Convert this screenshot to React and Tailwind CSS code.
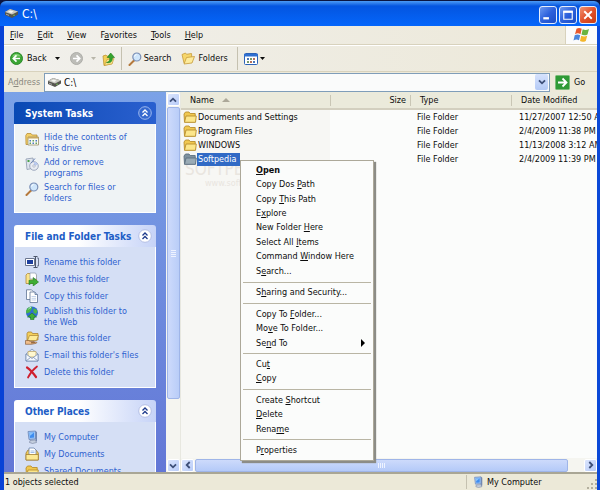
import { clsx } from "clsx"

const TASK_GROUPS = [
  {
    title: "System Tasks",
    primary: true,
    items: [
      { label: "Hide the contents of this drive", icon: HideIcon },
      { label: "Add or remove programs", icon: ProgramsIcon },
      { label: "Search for files or folders", icon: SearchIcon },
    ],
  },
  {
    title: "File and Folder Tasks",
    items: [
      { label: "Rename this folder", icon: RenameIcon },
      { label: "Move this folder", icon: MoveIcon },
      { label: "Copy this folder", icon: CopyIcon },
      { label: "Publish this folder to the Web", icon: GlobeIcon },
      { label: "Share this folder", icon: ShareIcon },
      { label: "E-mail this folder's files", icon: MailIcon },
      { label: "Delete this folder", icon: DeleteIcon },
    ],
  },
  {
    title: "Other Places",
    items: [
      { label: "My Computer", icon: ComputerIcon },
      { label: "My Documents", icon: DocumentsIcon },
      { label: "Shared Documents", icon: FolderIcon },
    ],
  },
]

const FILES = [
  { name: "Documents and Settings", date: "11/27/2007 12:50 AM" },
  { name: "Program Files", date: "2/4/2009 11:38 PM" },
  { name: "WINDOWS", date: "11/13/2008 3:12 AM" },
  { name: "Softpedia", date: "2/4/2009 11:39 PM", selected: true },
]

// "&" marks the access key, as in the Win32 resource files
const MENU_BAR = ["&File", "&Edit", "&View", "F&avorites", "&Tools", "&Help"]

const CONTEXT_MENU = [
  "&Open",
  "Copy Dos &Path",
  "Copy &This Path",
  "E&xplore",
  "New Folder &Here",
  "Select All &Items",
  "Command &Window Here",
  "S&earch...",
  "-",
  "S&haring and Security...",
  "-",
  "Copy To &Folder...",
  "Mo&ve To Folder...",
  "Se&nd To",
  "-",
  "Cu&t",
  "&Copy",
  "-",
  "Create &Shortcut",
  "&Delete",
  "Rena&me",
  "-",
  "P&roperties",
]

export default function App() {
  return (
    <div className="flex h-screen flex-col overflow-hidden bg-[#0a1440] pt-px font-['DejaVu_Sans_Condensed','DejaVu_Sans',sans-serif] text-[9px] leading-[11px] text-[#0c0c0c] select-none">
      <TitleBar />
      <div className="flex min-h-0 flex-1 flex-col border-r-3 border-l-4 border-r-[#0b49d8] border-l-[#0842d6] bg-[#ece9d8]">
        <MenuBar />
        <Toolbar />
        <AddressBar />
        <div className="flex min-h-0 flex-1">
          <Sidebar />
          <VerticalScrollbar />
          <FileList />
        </div>
        <StatusBar />
      </div>
    </div>
  )
}

function TitleBar() {
  return (
    <header className="flex h-[25px] shrink-0 items-center gap-1 rounded-t-md bg-linear-to-b from-[#4c9bf5] via-[#0455e0] via-20% to-[#0566fb] pr-[3px] pl-[5px]">
      <DriveIcon className="h-[9px] w-[13px]" />
      <h1 className="flex-1 text-xs text-white">C:\</h1>
      <div className="flex gap-[2px] pt-[2px]">
        <WindowButton label="Minimize">
          <path d="M3.500 12h6" strokeWidth="2.400" />
        </WindowButton>
        <WindowButton label="Maximize">
          <path d="M4 5h9v8H4z" strokeWidth="1.200" />
          <path d="M3.400 5h10.200" strokeWidth="2.400" />
        </WindowButton>
        <WindowButton label="Close" close>
          <path d="M4.500 4.500l8 8M12.500 4.500l-8 8" strokeWidth="2" />
        </WindowButton>
      </div>
    </header>
  )
}

function WindowButton({ label, close, children }) {
  return (
    <button
      aria-label={label}
      className={clsx(
        "size-[18px] rounded-[3px] border border-[#e6eefc] bg-linear-to-br",
        close ? "from-[#f0916f] via-[#e0512a] to-[#c93c10]" : "from-[#6d98f0] via-[#2c60dc] to-[#1c4cc4]"
      )}
    >
      <svg viewBox="0 0 17 17" className="size-4" fill="none" stroke="#fff">
        {children}
      </svg>
    </button>
  )
}

function AccessLabel({ text }) {
  const [before, rest] = text.split("&")
  return (
    <span>
      {before}
      <u className="underline-offset-1">{rest[0]}</u>
      {rest.slice(1)}
    </span>
  )
}

function MenuBar() {
  return (
    <nav className="flex h-[19px] shrink-0 border-b border-[#d8d2bd] bg-linear-to-r from-[#f1f0ec] to-[#ece8d8]">
      <div className="flex flex-1 items-center gap-[14px] pl-[6px]">
        {MENU_BAR.map((item) => (
          <button key={item}>
            <AccessLabel text={item} />
          </button>
        ))}
      </div>
      <div className="flex w-8 items-center justify-center border-l border-[#d8d2bd] bg-[#fbfbfb]">
        <WindowsFlag />
      </div>
    </nav>
  )
}

function Toolbar() {
  return (
    <div className="flex h-[27px] shrink-0 items-center border-t border-b border-t-white border-b-[#d8d2bd] bg-linear-to-r from-[#f1f0ec] to-[#ece8d8] pl-[6px]">
      <button className="flex items-center gap-1">
        <BackIcon />
        Back
        <Caret className="ml-1" />
      </button>
      <button className="ml-[10px] flex items-center gap-2" aria-label="Forward">
        <ForwardIcon />
        <Caret className="text-[#b8b6aa]" />
      </button>
      <button className="ml-[6px]" aria-label="Up">
        <UpIcon />
      </button>
      <Divider />
      <button className="flex items-center gap-[2px]">
        <SearchIcon className="size-[14px]" />
        Search
      </button>
      <button className="mr-[3px] ml-[10px] flex items-center gap-[3px]">
        <FoldersIcon />
        Folders
      </button>
      <Divider />
      <button className="flex items-center gap-[2px]" aria-label="Views">
        <ViewsIcon />
        <Caret />
      </button>
    </div>
  )
}

function Divider() {
  return <div className="mr-[6px] ml-[6px] h-[23px] w-px bg-[#c5c1b0]" />
}

function Caret({ className }) {
  return (
    <svg viewBox="0 0 5 3" className={clsx("h-[3px] w-[5px]", className)} fill="currentColor">
      <path d="M0 0h5L2.500 3z" />
    </svg>
  )
}

function AddressBar() {
  return (
    <div className="flex h-[20px] shrink-0 items-center bg-[#ede9d9]">
      <label htmlFor="address" className="w-10 pl-1 text-[#8a887e]">
        A<u>d</u>dress
      </label>
      <div className="flex h-[19px] flex-1 items-center gap-[3px] border border-[#7f9db9] bg-[#fafbfb] pr-px pl-[3px]">
        <DriveIcon className="h-[9px] w-[13px]" />
        <input id="address" defaultValue="C:\" className="min-w-0 flex-1 bg-transparent text-[10px] outline-none" />
        <button
          aria-label="Show addresses"
          className="flex h-4 w-[13px] items-center justify-center rounded-[2px] bg-linear-to-b from-[#d6e2fd] to-[#b4caf6]"
        >
          <Chevron className="rotate-180" />
        </button>
      </div>
      <button className="flex w-[47px] items-center gap-1 pl-[5px]">
        <GoIcon />
        Go
      </button>
    </div>
  )
}

function Sidebar() {
  return (
    <aside className="flex w-[162px] shrink-0 flex-col gap-3 overflow-hidden bg-linear-to-b from-[#7ba2e7] to-[#6377d6] px-[10px] pt-[10px]">
      {TASK_GROUPS.map((group) => (
        <section key={group.title} className="shrink-0">
          <h2
            className={clsx(
              "flex h-[22px] items-center justify-between rounded-t-[3px] pr-1 pl-[11px] text-[10px] font-bold",
              group.primary
                ? "bg-linear-to-r from-[#0849b4] to-[#2a60cf] text-white"
                : "bg-linear-to-r from-white from-45% to-[#c6d3f7] text-[#215dc6]"
            )}
          >
            {group.title}
            <CollapseIcon primary={group.primary} />
          </h2>
          <ul
            className={clsx(
              "flex flex-col gap-[3px] border border-t-0 border-white pt-2 pr-[14px] pb-2 pl-[10px]",
              group.primary ? "bg-[#eff3f5]" : "bg-[#d5dff5]"
            )}
          >
            {group.items.map(({ label, icon: Icon }) => (
              <li key={label}>
                <a href="#" className="flex items-start gap-[5px] text-[#2f62cf]">
                  <Icon className="size-[14px] shrink-0" />
                  <span className="flex min-h-[14px] flex-1 items-center">{label}</span>
                </a>
              </li>
            ))}
          </ul>
        </section>
      ))}
    </aside>
  )
}

function CollapseIcon({ primary }) {
  return (
    <svg viewBox="0 0 14 14" className="size-[14px]" fill="none">
      <circle cx="7" cy="7" r="6.300" fill={primary ? "#3568cf" : "#fff"} stroke={primary ? "#9db8ee" : "#b4bfe4"} />
      <path
        d="M4.500 6.500L7 4l2.500 2.500M4.500 10L7 7.500 9.500 10"
        stroke={primary ? "#fff" : "#1d3a8c"}
        strokeWidth="1.300"
      />
    </svg>
  )
}

function ScrollButton({ label, className }) {
  return (
    <button
      aria-label={label}
      className="flex size-[13px] shrink-0 items-center justify-center rounded-[2px] border border-white bg-linear-to-br from-[#dbe5fd] to-[#b8ccf8]"
    >
      <Chevron className={className} />
    </button>
  )
}

function Chevron({ className }) {
  return (
    <svg viewBox="0 0 8 6" className={clsx("h-[6px] w-2 shrink-0", className)} fill="none" stroke="#3d4f78" strokeWidth="1.800">
      <path d="M1 4.700L4 1.700l3 3" />
    </svg>
  )
}

function VerticalScrollbar() {
  return (
    <div className="flex w-[15px] shrink-0 flex-col items-center gap-px border-r border-[#e8e8e0] bg-[#f5f5f0] pt-px">
      <ScrollButton label="Scroll up" />
      <div className="flex w-[13px] flex-1 items-center justify-center rounded-[2px] border border-[#9fb5e8] bg-linear-to-r from-[#cddafb] to-[#b9cdf8]">
        <div className="flex flex-col gap-px">
          {[0, 1, 2, 3].map((i) => (
            <div key={i} className="h-px w-[5px] bg-[#eef3ff]" />
          ))}
        </div>
      </div>
      <div className="h-[58px]" />
      <ScrollButton label="Scroll down" className="rotate-180" />
    </div>
  )
}

function FileList() {
  return (
    <main className="relative flex min-w-0 flex-1 flex-col bg-[#fbfbfb] bg-[linear-gradient(to_right,#f7f7f4_149px,#fbfcfb_149px)]">
      <div className="min-h-0 flex-1 overflow-hidden">
        <table className="relative z-10 w-full table-fixed text-left whitespace-nowrap">
          <thead className="bg-[#ebeadb]">
            <tr className="h-[17px] border-b-2 border-[#d3cfbf]">
              <th className="w-[150px] py-0 pl-[9px] font-normal">
                <div className="flex items-center gap-2 border-r border-[#c9c6b5]">
                  Name
                  <svg viewBox="0 0 8 4" className="h-1 w-2" fill="#aca899">
                    <path d="M4 0l4 4H0z" />
                  </svg>
                </div>
              </th>
              <th className="w-20 p-0 text-right font-normal">
                <div className="border-r border-[#c9c6b5] pr-1">Size</div>
              </th>
              <th className="w-[101px] p-0 font-normal">
                <div className="border-r border-[#c9c6b5] pl-[9px]">Type</div>
              </th>
              <th className="overflow-hidden py-0 pl-[9px] font-normal">Date Modified</th>
            </tr>
          </thead>
          <tbody>
            {FILES.map((file) => (
              <tr key={file.name} className="h-[14px]">
                <td className="p-0 align-bottom">
                  <div className="flex items-center pl-[2px]">
                    <FolderIcon className="size-[14px]" selected={file.selected} />
                    <span className={clsx("px-px leading-[13px]", file.selected && "bg-[#316ac5] pr-1 text-white")}>{file.name}</span>
                  </div>
                </td>
                <td />
                <td className="pt-0 pb-px pl-[6px] align-bottom">File Folder</td>
                <td className="overflow-hidden pt-0 pb-px pl-[7px] align-bottom">{file.date}</td>
              </tr>
            ))}
          </tbody>
        </table>
      </div>
      <Watermark />
      <HorizontalScrollbar />
      <ContextMenu />
    </main>
  )
}

function Watermark() {
  return (
    <div className="absolute top-[68px] left-1 text-[#e9e5df]">
      <div className="text-[17px] leading-[18px]">SOFTPEDIA</div>
      <div className="pl-5">www.softpedia.com</div>
    </div>
  )
}

function HorizontalScrollbar() {
  return (
    <div className="flex h-[14px] shrink-0 items-center gap-px bg-[#f5f5f0]">
      <ScrollButton label="Scroll left" className="-rotate-90" />
      <div className="flex h-[13px] flex-1 items-center justify-center gap-px rounded-[2px] border border-[#9fb5e8] bg-linear-to-b from-[#cddafb] to-[#b4caf8]">
        {[0, 1, 2, 3].map((i) => (
          <div key={i} className="h-[5px] w-px bg-[#eef3ff]" />
        ))}
      </div>
      <div className="w-[14px]" />
      <ScrollButton label="Scroll right" className="rotate-90" />
    </div>
  )
}

function ContextMenu() {
  return (
    <div
      role="menu"
      className="absolute top-[68px] left-[59px] z-20 flex h-[301px] w-[134px] flex-col border border-[#aca899] bg-[#fbfcfb] p-[2px] shadow-[2px_2px_1px_#8c8c86]"
    >
      {CONTEXT_MENU.map((item, i) =>
        item === "-" ? (
          <div key={i} role="separator" className="flex h-[7px] items-center">
            <div className="h-px flex-1 bg-[#b9b5a4]" />
          </div>
        ) : (
          <button
            key={i}
            role="menuitem"
            className={clsx("flex min-h-0 flex-1 items-center justify-between pr-[6px] pl-[13px]", i === 0 && "font-bold")}
          >
            <AccessLabel text={item} />
            {item === "Se&nd To" && (
              <svg viewBox="0 0 4 8" className="h-2 w-1" fill="#000">
                <path d="M0 0l4 4-4 4z" />
              </svg>
            )}
          </button>
        )
      )}
    </div>
  )
}

function StatusBar() {
  return (
    <footer className="flex h-[18px] shrink-0 items-center border-t-2 border-[#a9a695] bg-[#ece9d8] pl-px">
      <div className="flex-1">1 objects selected</div>
      <div className="flex h-[14px] w-[131px] items-center gap-[3px] border-l border-[#c5c1b0] pl-[5px]">
        <ComputerIcon className="size-3" />
        <span className="flex-1">My Computer</span>
        <svg viewBox="0 0 10 10" className="size-[10px] self-end" fill="#b4b09e">
          <path d="M8 0h2v2H8zM8 4h2v2H8zM4 4h2v2H4zM8 8h2v2H8zM4 8h2v2H4zM0 8h2v2H0z" />
        </svg>
      </div>
    </footer>
  )
}

// --- Icons ---

function DriveIcon({ className }) {
  return (
    <svg viewBox="0 0 13 9" className={className}>
      <path d="M0 3l5-3 8 2.500v3L7 9 0 6z" fill="#55554f" />
      <path d="M0 3l5-3 8 2.500L7 5.500z" fill="#c9c9c2" />
      <path d="M3 2.800l2.500-1.300 3 1-2.300 1.400z" fill="#f6f6f2" />
      <path d="M1 5.200l3 1.200" stroke="#aaa" />
      <circle cx="9" cy="6.300" r=".7" fill="#7ddb5a" />
    </svg>
  )
}

function WindowsFlag() {
  return (
    <svg viewBox="0 0 17 16" className="h-4 w-[17px]">
      <path d="M3.500 1.800C5.500.5 7 .8 8.700 1.800L7.500 7.200C5.800 6.200 4.200 6 2 7.200z" fill="#e8582c" />
      <path d="M9.700 2.200c2 1 3.800 1 6.300-.2l-1.500 5.400c-2 1.200-4 1.100-6 .2z" fill="#69b440" />
      <path d="M1.700 8.300c2-1.200 3.800-1 5.500 0L6 13.300c-1.800-1-3.500-1-5.500.2z" fill="#4b86dc" />
      <path d="M8.200 8.700c2 1 4 1 6 0l-1.400 5.200c-2 1.200-4 1.200-5.800.2z" fill="#f3b62c" />
    </svg>
  )
}

function BackIcon() {
  return (
    <svg viewBox="0 0 13 13" className="size-[13px]" fill="none">
      <circle cx="6.500" cy="6.500" r="6" fill="#3ba535" stroke="#2c8a2a" />
      <path d="M2 4.500a5 5 0 019 0" fill="#7fd070" />
      <path d="M10 6.500H3.500M6.500 3.300L3.300 6.500l3.200 3.200" stroke="#fff" strokeWidth="1.700" />
    </svg>
  )
}

function ForwardIcon() {
  return (
    <svg viewBox="0 0 13 13" className="size-[13px]" fill="none">
      <circle cx="6.500" cy="6.500" r="6" fill="#bdbdb8" stroke="#adada8" />
      <path d="M3 6.500h6.500M6.500 3.300l3.200 3.200-3.200 3.200" stroke="#fff" strokeWidth="1.700" />
    </svg>
  )
}

function UpIcon() {
  return (
    <svg viewBox="0 0 13 14" className="h-[14px] w-[13px]">
      <path d="M1 4l3-1 1 1.300 5-.8v8.200L2 13.500z" fill="#f3cf58" stroke="#c09532" strokeWidth=".8" />
      <path d="M2.500 13.300L5 7.500l7-1-2 5.500z" fill="#fbe68c" stroke="#c09532" strokeWidth=".6" />
      <path d="M4.500 10.500C7.500 10 8 8 7.700 5.500H5.200L8.700 1l3.800 4.500h-2.200C10.500 9 9 11.500 4.500 10.500z" fill="#35a52d" stroke="#1d7a1c" strokeWidth=".6" />
    </svg>
  )
}

function SearchIcon({ className }) {
  return (
    <svg viewBox="0 0 14 14" className={className} fill="none">
      <path d="M6 8.500L1.500 13" stroke="#b5793c" strokeWidth="2" strokeLinecap="round" />
      <circle cx="8.800" cy="5" r="4" fill="#cfe6fb" stroke="#7b8fb5" strokeWidth="1.200" />
      <path d="M6.500 4.500a2.500 2.500 0 012-2" stroke="#fff" />
    </svg>
  )
}

function FoldersIcon() {
  return (
    <svg viewBox="0 0 14 13" className="h-[13px] w-[14px]">
      <path d="M1 2.500L4.500 1l1 1.300 5-.8.500 7L3 11z" fill="#f6d66a" stroke="#c79a3a" strokeWidth=".8" />
      <path d="M3 12L5.500 5.500l8-1L11 11z" fill="#fdeb9c" stroke="#c79a3a" strokeWidth=".8" />
    </svg>
  )
}

function ViewsIcon() {
  return (
    <svg viewBox="0 0 14 12" className="h-3 w-[14px]">
      <rect x=".5" y=".5" width="13" height="11" rx="1" fill="#fff" stroke="#2c62b8" />
      <path d="M0 1h14v2.500H0z" fill="#2f6fd0" />
      <path d="M3 5h2v2H3zM9 8h2v2H9z" fill="#4b76b8" />
      <path d="M6 5h2v2H6zM3 8h2v2H3z" fill="#7a9a6a" />
      <path d="M9 5h2v2H9zM6 8h2v2H6z" fill="#b8705a" />
    </svg>
  )
}

function GoIcon() {
  return (
    <svg viewBox="0 0 15 15" className="size-[15px]" fill="none">
      <rect x=".5" y=".5" width="14" height="14" rx="1" fill="#2f9a35" stroke="#7cbc78" />
      <path d="M3 7.500h8M7.500 3.500l4 4-4 4" stroke="#fff" strokeWidth="1.800" />
    </svg>
  )
}

function FolderIcon({ className, selected }) {
  return (
    <svg viewBox="0 0 14 14" className={className}>
      <path
        d="M1 4l1.500-2h3.500l1.200 1.500h5V12H1.500z"
        fill={selected ? "#7f929f" : "#f0c850"}
        stroke={selected ? "#5d7180" : "#b98f2e"}
        strokeWidth=".9"
      />
      <path
        d="M1.500 12.300L3 6h10.300l-.8 6.300z"
        fill={selected ? "#9aabb5" : "#fce68a"}
        stroke={selected ? "#5d7180" : "#b98f2e"}
        strokeWidth=".9"
      />
    </svg>
  )
}

function HideIcon({ className }) {
  return (
    <svg viewBox="0 0 14 14" className={className}>
      <path d="M.8 3.500L2 1.500h4L7.200 3H12v9.500H1z" fill="#f3cf66" stroke="#b98f3a" strokeWidth=".8" />
      <path d="M3 5h10.500v8H3z" fill="#fbfbf4" stroke="#9a8f68" strokeWidth=".8" />
      <path d="M3 5h10.500v1.500H3z" fill="#c9a860" />
      <path d="M4.500 8H6v1.500H4.500zM10.500 8H12v1.500h-1.500zM7.500 10.500H9V12H7.500z" fill="#4b79c4" />
      <path d="M7.500 8H9v1.500H7.500zM4.500 10.500H6V12H4.500zM10.500 10.500H12V12h-1.500z" fill="#63a05a" />
    </svg>
  )
}

function ProgramsIcon({ className }) {
  return (
    <svg viewBox="0 0 14 14" className={className}>
      <path d="M1 2l7-1 1 10-7 1.500z" fill="#dfe5ee" stroke="#8d99ae" strokeWidth=".8" />
      <path d="M2.500 3h2v2h-2z" fill="#4aa24a" />
      <circle cx="9" cy="9" r="4.300" fill="#e8ebf2" stroke="#8d97b0" strokeWidth=".8" />
      <path d="M9 9l4-1.500A4.300 4.300 0 009 4.700z" fill="#b9c9ef" />
      <circle cx="9" cy="9" r="1.200" fill="#fff" stroke="#8d97b0" strokeWidth=".6" />
      <path d="M6 6l4-4.500" stroke="#6c84b8" />
    </svg>
  )
}

function RenameIcon({ className }) {
  return (
    <svg viewBox="0 0 14 14" className={className}>
      <path d="M.5 3.500h9v7h-9z" fill="#fff" stroke="#6b7690" />
      <path d="M2 5h6v4H2z" fill="#1d3f9e" />
      <path d="M8.500 1.500h4M8.500 12.500h4M10.500 1.500v11" stroke="#4d566b" />
      <path d="M12 3h1.500v8H12" fill="none" stroke="#6b7690" />
    </svg>
  )
}

function MoveIcon({ className }) {
  return (
    <svg viewBox="0 0 14 14" className={className}>
      <path d="M1 3l1.500-1.500h3L6.500 3h5v8.500H1z" fill="#fbe48a" stroke="#b08a3a" strokeWidth=".8" />
      <path d="M5 1h5.500l1 2v4H5z" fill="#fff" stroke="#8d99ae" strokeWidth=".7" />
      <path d="M4 8.200h4.200V5.500L13.500 10l-5.300 4v-2.600c-2 0-3.200.4-4.200 1.400z" fill="#3eae36" stroke="#1e7a1f" strokeWidth=".6" />
    </svg>
  )
}

function CopyIcon({ className }) {
  return (
    <svg viewBox="0 0 14 14" className={className} fill="#fff" stroke="#5f7394" strokeWidth=".8">
      <path d="M1.500.8h5l2 2v7.700h-7z" />
      <path d="M5 3h5l2.500 2.500v8H5z" />
      <path d="M10 3v2.500h2.500" fill="#bfd4f2" />
      <path d="M6.500 7.500H11M6.500 9.300H11M6.500 11H11" stroke="#b4c6e4" />
    </svg>
  )
}

function GlobeIcon({ className }) {
  return (
    <svg viewBox="0 0 14 14" className={className}>
      <circle cx="7" cy="6.500" r="6" fill="#2f6ed2" />
      <path d="M2 3c2-2.500 4-2.300 5-2 .5 2-1 2.500-1.500 4S3 7 1.500 7.500C.8 6 1 4.500 2 3zM8.500 2.500c2 0 3.500 1 4 3L11 8 8.500 6.500z" fill="#4cb648" />
      <path d="M7 7l4.500 4H9v2.500H5.500V11h-3z" fill="#3fae3a" stroke="#1e7426" strokeWidth=".6" />
      <path d="M3.500 3a4 4 0 012.500-1.500" stroke="#cfe8ff" fill="none" />
    </svg>
  )
}

function ShareIcon({ className }) {
  return (
    <svg viewBox="0 0 14 14" className={className}>
      <path d="M2 2.500L3 1h3.500l1 1.500h5.500V9H2z" fill="#f3cf5c" stroke="#a98334" strokeWidth=".8" />
      <path d="M2.500 9.500L4.500 4.500H13.500L11.500 9.500z" fill="#fdeb98" stroke="#a98334" strokeWidth=".7" />
      <path d="M.5 9.500h3l2 1h3.500c1 .3.800 1.200 0 1.300H6l5-.8c1-.1 1 1 .2 1.300L6.500 13.300H.5z" fill="#f1bd8a" stroke="#7a4f28" strokeWidth=".6" />
    </svg>
  )
}

function MailIcon({ className }) {
  return (
    <svg viewBox="0 0 14 14" className={className} stroke="#7a8fb4" strokeWidth=".8">
      <path d="M1 6l6-5 6 5v7H1z" fill="#dbe7f8" />
      <path d="M3 3.500h8V9H3z" fill="#fff8d0" stroke="#c0aa70" />
      <path d="M1 6l6 4.500L13 6v7H1z" fill="#f4f8ff" />
      <path d="M1 13l4.500-3.500M13 13L8.500 9.500" fill="none" />
    </svg>
  )
}

function DeleteIcon({ className }) {
  return (
    <svg viewBox="0 0 14 14" className={className} fill="none" stroke="#cf1f2e" strokeLinecap="round">
      <path d="M2 2.500c3 2 6.500 6 9 9.500" strokeWidth="2.200" />
      <path d="M12 1.500C8 4.500 5 8.500 3 12.500" strokeWidth="1.700" />
    </svg>
  )
}

function ComputerIcon({ className }) {
  return (
    <svg viewBox="0 0 14 14" className={className}>
      <path d="M3 1.500L10.500 1v8L4 9.500z" fill="#9cc4f6" stroke="#6b86b8" strokeWidth=".8" />
      <path d="M4.500 2.800L9 2.500v5L5 8z" fill="#3f8df0" />
      <path d="M4.500 2.800L9 2.500 4.800 6z" fill="#8cc4fb" />
      <path d="M10.500 1L12 2v9l-1.500 1z" fill="#7387b0" />
      <path d="M5 10.500l5.500-.5 1 2.500-4 1-3-1z" fill="#c4cede" stroke="#73809c" strokeWidth=".6" />
    </svg>
  )
}

function DocumentsIcon({ className }) {
  return (
    <svg viewBox="0 0 14 14" className={className}>
      <path d="M1 6l2-3h8l2.300 3v7H1z" fill="#f1cb58" stroke="#a27e31" strokeWidth=".8" />
      <path d="M4 1h5l2 2v6H4z" fill="#fff" stroke="#6b83ad" strokeWidth=".8" />
      <path d="M5.500 4h4M5.500 5.500h4" stroke="#8ab0e4" strokeWidth=".8" />
      <path d="M1 7.500h12.300V13H1z" fill="#fce994" stroke="#a27e31" strokeWidth=".8" />
    </svg>
  )
}
